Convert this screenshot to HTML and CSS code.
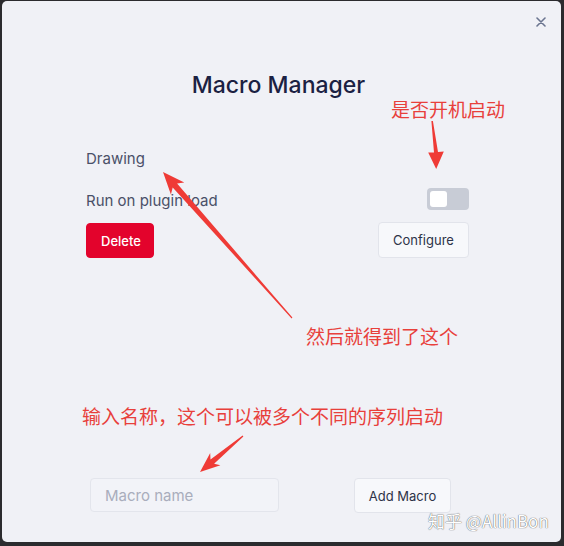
FILE: index.html
```html
<!DOCTYPE html>
<html lang="en">
<head>
<meta charset="utf-8">
<title>Macro Manager</title>
<link rel="stylesheet" href="styles.css">
</head>
<body>
<div class="stage">
  <div class="modal">
    <div class="modal-header">
      <button class="close" aria-label="Close">
        <svg width="10" height="10" viewBox="0 0 10 10"><path d="M1 1L9 9M9 1L1 9" stroke="#6b7590" stroke-width="1.6" stroke-linecap="round"/></svg>
      </button>
    </div>
    <h1 class="title">Macro Manager</h1>
    <div class="macro">
      <div class="macro-name">Drawing</div>
      <div class="row run-row">
        <span class="label">Run on plugin load</span>
        <span class="toggle"><span class="knob"></span></span>
      </div>
      <div class="row actions">
        <button class="btn danger">Delete</button>
        <button class="btn">Configure</button>
      </div>
    </div>
    <div class="add-row">
      <input class="name-input" type="text" placeholder="Macro name">
      <button class="btn add">Add Macro</button>
    </div>
  </div>

  <div class="note note-boot">是否开机启动</div>
  <div class="note note-result">然后就得到了这个</div>
  <div class="note note-input">输入名称，这个可以被多个不同的序列启动</div>
  <div class="watermark">知乎 @AllinBon</div>

  <svg class="arrows" width="564" height="546" viewBox="0 0 564 546">
    <polygon fill="#ef3b36" points="431.4,121 432.9,121 438,152 443.8,151.5 436.2,169 428.2,152.5 434,152.5"/>
    <polygon fill="#ef3b36" points="163,172 184.3,182.5 177.1,183.5 292.4,317.6 291.6,318.4 172.7,187.5 170.9,194.5"/>
    <polygon fill="#ef3b36" points="200,472 210.2,453.1 210.5,459.6 242.6,435.5 243.4,436.5 214.1,463.8 220.4,465.3"/>
  </svg>
</div>
</body>
</html>
```
FILE: styles.css
```css
html, body {
  margin: 0;
  padding: 0;
  background: #2b2b2e;
}

body {
  width: 564px;
  height: 546px;
  overflow: hidden;
  font-family: Inter, "Noto Sans", "Liberation Sans", sans-serif;
}

.stage {
  position: relative;
  width: 564px;
  height: 546px;
  padding: 1px 0 0 2px;
  box-sizing: border-box;
}

.modal {
  width: 559px;
  height: 541px;
  box-sizing: border-box;
  background: #f0f1f6;
  border-radius: 5px;
  display: flex;
  flex-direction: column;
}

.modal-header {
  display: flex;
  justify-content: flex-end;
  padding: 11px 10px 0 0;
}

.close {
  width: 20px;
  height: 20px;
  padding: 0;
  border: none;
  background: transparent;
  display: flex;
  align-items: center;
  justify-content: center;
}

.title {
  margin: 40px 0 0 0;
  font-size: 23px;
  line-height: 26px;
  font-weight: 500;
  color: #1b2142;
  text-align: center;
  padding-right: 6px;
}

.macro {
  margin: 50px 92px 0 84px;
  display: flex;
  flex-direction: column;
}

.macro-name {
  font-size: 15px;
  line-height: 20px;
  color: #4a5068;
  padding-top: 1px;
}

.row {
  display: flex;
  align-items: center;
  justify-content: space-between;
}

.run-row {
  margin-top: 19px;
  height: 22px;
}

.label {
  font-size: 15px;
  line-height: 20px;
  color: #4a5068;
  margin-top: 3px;
}

.toggle {
  width: 42px;
  height: 22px;
  border-radius: 4px;
  background: #c8ccd6;
  display: flex;
  align-items: center;
  padding-left: 3px;
  box-sizing: border-box;
}

.knob {
  width: 17px;
  height: 16px;
  border-radius: 3px;
  background: #ffffff;
}

.actions {
  margin-top: 12px;
}

.btn {
  font-family: Inter, "Noto Sans", "Liberation Sans", sans-serif;
  font-size: 13px;
  height: 36px;
  padding: 0 14px;
  border-radius: 4px;
  border: 1px solid #e2e4eb;
  background: #f7f8fb;
  color: #2d3348;
  box-sizing: border-box;
  white-space: nowrap;
}

.actions .btn:last-child {
  width: 91px;
}

.danger {
  background: #e3032c;
  border-color: #e3032c;
  color: #ffffff;
  font-weight: 500;
  width: 68px;
  height: 35px;
  align-self: flex-end;
}

.add-row {
  margin: 220px 0 0 88px;
  display: flex;
  align-items: flex-start;
}

.name-input {
  width: 189px;
  height: 34px;
  box-sizing: border-box;
  border: 1px solid #e3e5ec;
  border-radius: 4px;
  background: #f2f3f8;
  padding: 0 14px;
  font-family: Inter, "Noto Sans", "Liberation Sans", sans-serif;
  font-size: 15px;
  color: #2d3348;
  outline: none;
}

.name-input::placeholder {
  color: #a9adbc;
}

.add {
  margin-left: 75px;
  width: 97px;
  height: 35px;
  padding: 0;
}

.note {
  position: absolute;
  font-family: "Noto Sans CJK SC", "Noto Sans", sans-serif;
  font-size: 19px;
  line-height: 22px;
  color: #e8403b;
  white-space: nowrap;
}

.note-boot {
  left: 391px;
  top: 98px;
}

.note-result {
  left: 306px;
  top: 325px;
}

.note-input {
  left: 82px;
  top: 405px;
}

.watermark {
  position: absolute;
  left: 428px;
  top: 511px;
  font-family: "Noto Sans CJK SC", "Liberation Sans", sans-serif;
  font-size: 17px;
  line-height: 20px;
  color: #ffffff;
  text-shadow: 0 0 1px rgba(0, 0, 0, 0.6), 0 0 1px rgba(0, 0, 0, 0.4);
  white-space: nowrap;
}

.arrows {
  position: absolute;
  left: 0;
  top: 0;
  pointer-events: none;
}
```
